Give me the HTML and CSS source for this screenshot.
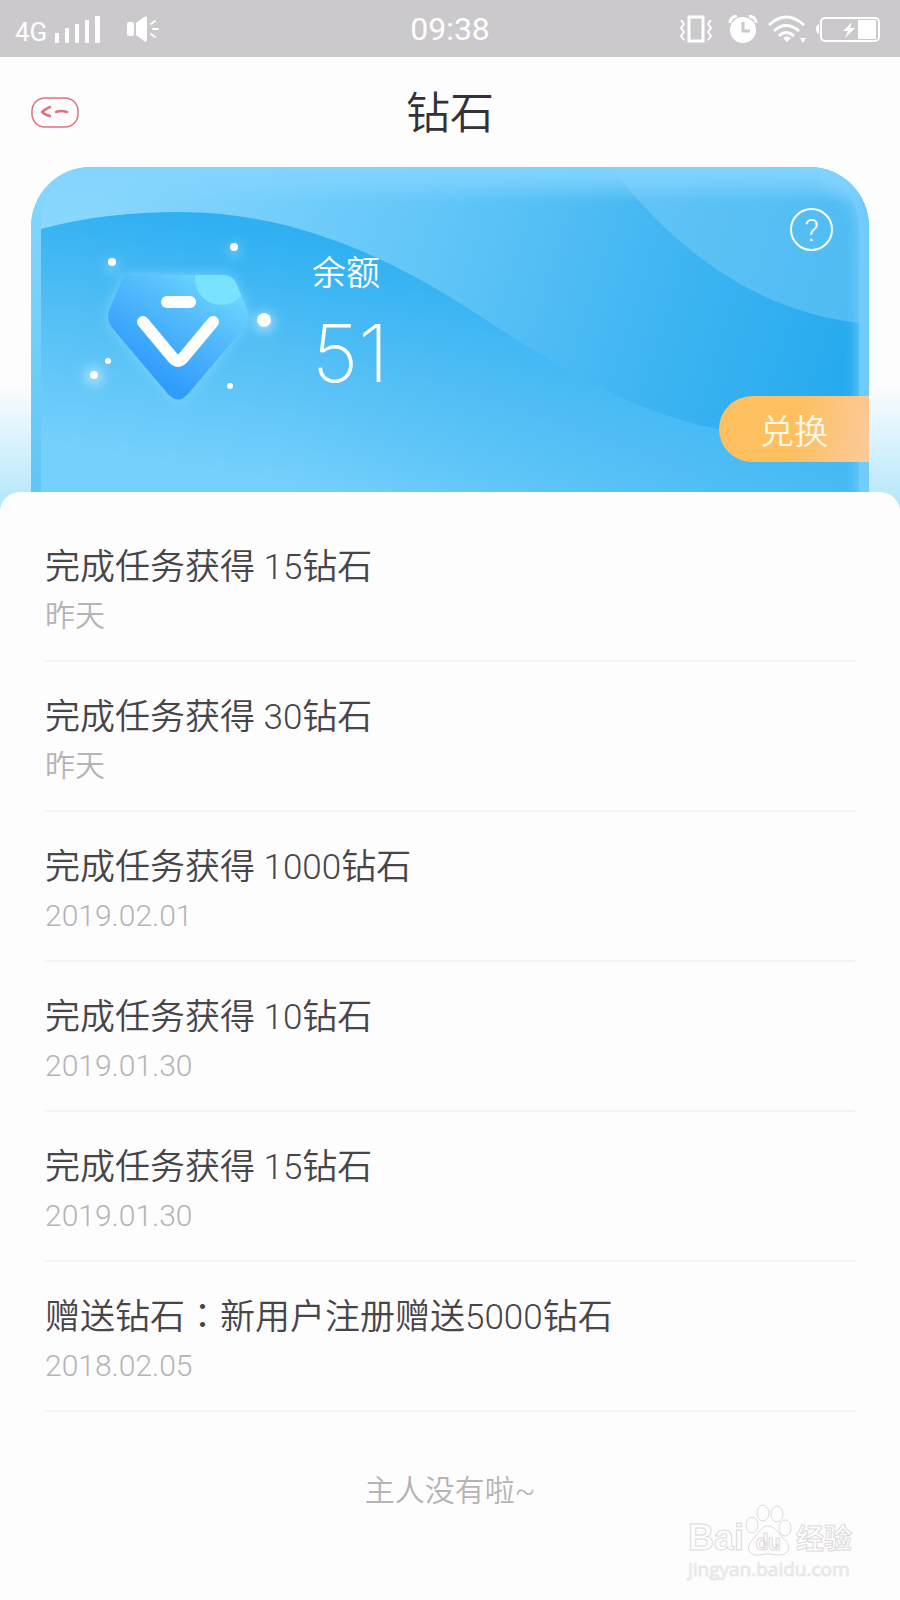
FILE: index.html
```html
<!DOCTYPE html>
<html lang="zh-CN">
<head>
    <meta charset="UTF-8">
    <meta name="viewport" content="width=device-width, initial-scale=1.0">
    <title>钻石</title>
    <link rel="stylesheet" href="styles.css">
</head>
<body>
    <div class="status-bar">
        <div class="status-left">
            <span class="network">4G</span>
            <svg class="signal" width="46" height="28" viewBox="0 0 46 28" fill="#fff">
                <path d="M0 18h4v10H0zM10 13h4v15h-4zM20 9h4v19h-4zM30 5h4v23h-4zM40 1h5v27h-5z"/>
            </svg>
            <svg width="32" height="28" viewBox="0 0 32 28" fill="#fff">
                <rect x="0" y="7" width="7" height="14" rx="2"/>
                <path d="M9 8l8-6q3-2 3 1v22q0 3-3 1l-8-6z"/>
                <path d="M24 9l4-3M26 14h5M24 19l4 3" stroke="#fff" stroke-width="2" stroke-linecap="round"/>
            </svg>
        </div>
        <div class="status-time">09:38</div>
        <div class="status-right">
            <svg class="vibrate" width="32" height="28" viewBox="0 0 32 28" fill="none" stroke="#fff">
                <rect x="9" y="2" width="14" height="24" stroke-width="3"/>
                <path d="M1 5l3 4-3 4 3 4-3 4 3 4M31 5l-3 4 3 4-3 4 3 4-3 4" stroke-width="2"/>
            </svg>
            <svg width="30" height="28" viewBox="0 0 30 28">
                <circle cx="15" cy="15" r="13" fill="#fff"/>
                <path d="M2 8q0-6 7-7M28 8q0-6-7-7" fill="none" stroke="#fff" stroke-width="3"/>
                <path d="M15 7v9h7" fill="none" stroke="#cbc9cc" stroke-width="3"/>
            </svg>
            <svg width="38" height="28" viewBox="0 0 38 28">
                <g fill="none" stroke="#fff" stroke-width="3">
                    <path d="M1 10q17-16 35 0"/>
                    <path d="M6 16q12-11 25 0"/>
                    <path d="M11 21q7-7 15 0"/>
                </g>
                <path d="M15 23q4-3 8 0l-4 4zM32 23h6l-3 5z" fill="#fff"/>
            </svg>
            <svg width="64" height="28" viewBox="0 0 64 28">
                <path d="M3 9q-3 1-3 5t3 5z" fill="#fff"/>
                <rect x="5" y="3" width="58" height="23" rx="4" fill="none" stroke="#fff" stroke-width="2"/>
                <path d="M36 7l-9 9h5l-3 7 10-10h-5z" fill="#fff"/>
                <rect x="42" y="5" width="18" height="19" rx="1" fill="#fff"/>
            </svg>
        </div>
    </div>

    <header class="header">
        <button class="back" aria-label="返回">
            <svg width="48" height="31" viewBox="0 0 48 31" fill="none" stroke="#de7280">
                <rect x="1" y="1" width="46" height="29" rx="13" stroke-width="1.5"/>
                <path d="M19 10q-5 2-8 5 3 3 8 4M25 15q5-2 11 0" stroke-width="2.5" stroke-linecap="round" stroke-linejoin="round"/>
            </svg>
        </button>
        <h1 class="title">钻石</h1>
    </header>

    <div class="banner">
        <div class="card">
            <svg class="card-bg" viewBox="0 0 838 325" preserveAspectRatio="none">
                <defs>
                    <linearGradient id="sky" gradientUnits="userSpaceOnUse" x1="80" y1="0" x2="800" y2="230">
                        <stop offset="0" stop-color="#87d7fe"/>
                        <stop offset="0.45" stop-color="#60c5f7"/>
                        <stop offset="0.75" stop-color="#3fb5f2"/>
                        <stop offset="1" stop-color="#27abef"/>
                    </linearGradient>
                    <linearGradient id="wave" gradientUnits="userSpaceOnUse" x1="200" y1="60" x2="160" y2="300">
                        <stop offset="0" stop-color="#30b0f2"/>
                        <stop offset="0.5" stop-color="#55c0f5"/>
                        <stop offset="1" stop-color="#75d0fb"/>
                    </linearGradient>
                    <linearGradient id="waveShade" x1="0" y1="0" x2="1" y2="0">
                        <stop offset="0.3" stop-color="#3ab4f3" stop-opacity="0"/>
                        <stop offset="1" stop-color="#3ab4f3" stop-opacity="0.65"/>
                    </linearGradient>
                    <linearGradient id="edge" x1="0" y1="0" x2="0" y2="1">
                        <stop offset="0" stop-color="#87d7fe"/>
                        <stop offset="1" stop-color="#60c6f6"/>
                    </linearGradient>
                    <linearGradient id="topGlow" x1="0" y1="0" x2="0" y2="1">
                        <stop offset="0" stop-color="#84d4ff" stop-opacity="0.95"/>
                        <stop offset="0.35" stop-color="#84d4ff" stop-opacity="0.75"/>
                        <stop offset="1" stop-color="#84d4ff" stop-opacity="0"/>
                    </linearGradient>
                    <filter id="soft" x="-50%" y="-10%" width="200%" height="120%">
                        <feGaussianBlur stdDeviation="6"/>
                    </filter>
                </defs>
                <rect width="838" height="325" fill="url(#sky)"/>
                <path d="M580 0C640 80 725 145 828 156V0z" fill="#8ad4fb" fill-opacity="0.4"/>
                <path d="M10 62C55 50 100 45 149 45C250 45 340 82 419 130C500 181 580 240 686 262C740 274 790 280 838 282V325H10z" fill="url(#wave)"/>
                <path d="M10 62C55 50 100 45 149 45C250 45 340 82 419 130C500 181 580 240 686 262C740 274 790 280 838 282V325H10z" fill="url(#waveShade)"/>
                <path d="M790 14Q832 22 832 62V340" fill="none" stroke="#7dd0fd" stroke-width="12" stroke-opacity="0.8" filter="url(#soft)"/>
                <path d="M0 0H60Q10 8 10 62V325H0z" fill="url(#edge)"/>
                <path d="M770 0H838V325H828V62Q828 10 770 10z" fill="#76cefc" fill-opacity="0.8"/>
                <rect width="838" height="36" fill="url(#topGlow)"/>
            </svg>

            <svg class="diamond" width="200" height="170" viewBox="0 0 200 170">
                <defs>
                    <linearGradient id="gem" x1="0.8" y1="0.1" x2="0.3" y2="0.75">
                        <stop offset="0" stop-color="#6dd9ff"/>
                        <stop offset="0.4" stop-color="#55bdfb"/>
                        <stop offset="1" stop-color="#309dfd"/>
                    </linearGradient>
                    <clipPath id="gemShape">
                        <path d="M48 35H143Q152 35 156 43L166 67Q172 78 163 89L108 154Q98 165 88 154L33 89Q25 80 30 68L40 44Q43 35 48 35z"/>
                    </clipPath>
                    <filter id="glow" x="-100%" y="-100%" width="300%" height="300%">
                        <feGaussianBlur stdDeviation="6"/>
                    </filter>
                </defs>
                <path d="M48 35H143Q152 35 156 43L166 67Q172 78 163 89L108 154Q98 165 88 154L33 89Q25 80 30 68L40 44Q43 35 48 35z" fill="#8fdcff" fill-opacity="0.7" filter="url(#glow)"/>
                <g fill="#fff" fill-opacity="0.5" filter="url(#glow)">
                    <circle cx="184" cy="82" r="10"/>
                    <circle cx="14" cy="136" r="9"/>
                    <circle cx="154" cy="10" r="5"/>
                    <circle cx="32" cy="26" r="5"/>
                </g>
                <g clip-path="url(#gemShape)">
                    <rect x="20" y="30" width="160" height="135" fill="url(#gem)"/>
                    <circle cx="141" cy="39" r="26" fill="#78e2ff"/>
                </g>
                <rect x="81" y="56" width="35" height="12" rx="6" fill="#fff"/>
                <path d="M63 82L93 118Q98 124 103 118L133 82" fill="none" stroke="#fff" stroke-width="12" stroke-linecap="round"/>
                <g fill="#fff">
                    <circle cx="154" cy="7" r="4"/>
                    <circle cx="32" cy="22" r="4"/>
                    <circle cx="184" cy="80" r="7"/>
                    <circle cx="28" cy="121" r="3"/>
                    <circle cx="14" cy="135" r="4"/>
                    <circle cx="150" cy="146" r="3"/>
                </g>
            </svg>

            <div class="balance">
                <div class="balance-label">余额</div>
                <div class="balance-value">51</div>
            </div>

            <div class="card-actions">
                <button class="help" aria-label="帮助">?</button>
                <button class="exchange">兑换</button>
            </div>
        </div>
    </div>

    <main class="records">
        <ul class="record-list">
            <li class="record">
                <div class="record-name">完成任务获得 15钻石</div>
                <div class="record-date">昨天</div>
            </li>
            <li class="record">
                <div class="record-name">完成任务获得 30钻石</div>
                <div class="record-date">昨天</div>
            </li>
            <li class="record">
                <div class="record-name">完成任务获得 1000钻石</div>
                <div class="record-date">2019.02.01</div>
            </li>
            <li class="record">
                <div class="record-name">完成任务获得 10钻石</div>
                <div class="record-date">2019.01.30</div>
            </li>
            <li class="record">
                <div class="record-name">完成任务获得 15钻石</div>
                <div class="record-date">2019.01.30</div>
            </li>
            <li class="record">
                <div class="record-name">赠送钻石<span class="colon" lang="zh-TW">：</span>新用户注册赠送5000钻石</div>
                <div class="record-date">2018.02.05</div>
            </li>
        </ul>
        <p class="end">主人没有啦~</p>
    </main>

    <div class="watermark">
        <div class="brand">
            <span class="brand-bai">Bai</span>
            <span class="brand-paw">
                <svg width="48" height="52" viewBox="0 0 48 52" fill="#fefdfe" stroke="#dcdadc">
                    <ellipse cx="8" cy="21" rx="6" ry="8"/>
                    <ellipse cx="19" cy="9" rx="6" ry="8"/>
                    <ellipse cx="33" cy="10" rx="6" ry="8"/>
                    <ellipse cx="41" cy="24" rx="6" ry="8"/>
                    <path d="M24 22C30 22 33 27 38 33C45 39 47 45 42 49C37 53 31 50 24 50C17 50 12 53 7 49C2 45 5 39 11 33C16 27 18 22 24 22z"/>
                </svg>
                <span class="brand-du">du</span>
            </span>
            <span class="brand-jy">经验</span>
        </div>
        <div class="site">jingyan.baidu.com</div>
    </div>
</body>
</html>
```

FILE: styles.css
```css
* {
    box-sizing: border-box;
}

body {
    position: relative;
    margin: 0;
    min-height: 100vh;
    background-color: #fefdfe;
    color: #474548;
    font-family: Roboto, "Noto Sans CJK SC", sans-serif;
    font-weight: 350;
}

button {
    padding: 0;
    border: none;
    background: none;
    font-family: inherit;
    font-weight: inherit;
    cursor: pointer;
}

svg {
    display: block;
}

.status-bar {
    display: grid;
    grid-template-columns: 1fr auto 1fr;
    align-items: center;
    height: 57px;
    padding: 0 15px;
    background-color: #cbc9cc;
    color: #fff;
}

.status-left,
.status-right {
    display: flex;
    align-items: center;
}

.status-right {
    justify-content: flex-end;
    gap: 10px;
    padding-right: 5px;
}

.vibrate {
    margin-right: 6px;
}

.network {
    padding-top: 6px;
    font-size: 26px;
    line-height: 28px;
    font-weight: 400;
}

.signal {
    margin: 0 26px 0 8px;
}

.status-time {
    font-size: 32px;
    font-weight: 400;
}

.header {
    display: grid;
    grid-template-columns: 1fr auto 1fr;
    align-items: center;
    height: 110px;
    padding: 0 31px;
}

.back {
    justify-self: start;
}

.title {
    margin: 0;
    padding-bottom: 4px;
    color: #333135;
    font-size: 44px;
    font-weight: 350;
}

.banner {
    padding: 0 31px;
    background: linear-gradient(#fefdfe 62%, #b0e5fb 100%);
}

.card {
    position: relative;
    display: flex;
    height: 345px;
    padding: 73px 0 0 49px;
    border-radius: 60px 60px 0 0;
    overflow: hidden;
    color: #fff;
}

.card-bg {
    position: absolute;
    top: 0;
    left: 0;
    width: 100%;
    height: 325px;
}

.diamond {
    position: relative;
    overflow: visible;
}

.balance {
    position: relative;
    flex: 1;
    padding: 8px 0 0 32px;
}

.balance-label {
    font-size: 34px;
    line-height: 50px;
}

.balance-value {
    font-family: Inter, sans-serif;
    font-size: 80px;
    font-weight: 250;
    line-height: 110px;
}

.card-actions {
    position: relative;
    display: flex;
    flex-direction: column;
    align-items: flex-end;
    justify-content: space-between;
    height: 254px;
    margin-top: -32px;
}

.help {
    width: 43px;
    height: 43px;
    margin-right: 36px;
    border: 2px solid #fff;
    border-radius: 50%;
    color: #fff;
    font-size: 32px;
    line-height: 38px;
}

.exchange {
    width: 150px;
    height: 66px;
    border-radius: 33px 0 0 33px;
    background: linear-gradient(100deg, #fdbf5f 50%, #fcca9b);
    color: #fff8ea;
    font-size: 34px;
}

.records {
    position: relative;
    margin-top: -20px;
    padding: 20px 45px 0;
    border-radius: 20px 20px 0 0;
    background-color: #fefdfe;
}

.record-list {
    margin: 0;
    padding: 0;
    list-style: none;
}

.record {
    height: 150px;
    padding-top: 30px;
    border-bottom: 2px solid #f4f3f6;
}

.record-name {
    font-size: 35px;
    line-height: 52px;
}

.colon {
    font-family: Roboto, "Noto Sans CJK TC", sans-serif;
}

.record-date {
    color: #b5b3b6;
    font-size: 30px;
    line-height: 44px;
}

.end {
    margin: 56px 0 0;
    color: #b5b3b6;
    font-size: 30px;
    line-height: 46px;
    text-align: center;
}

.watermark {
    position: absolute;
    right: 48px;
    bottom: 18px;
    color: #fefdfe;
    font-weight: 700;
    -webkit-text-stroke: 1px #dcdadc;
}

.brand {
    display: flex;
    align-items: flex-end;
    height: 54px;
    line-height: 36px;
}

.brand-bai {
    font-family: "Liberation Sans", sans-serif;
    font-size: 36px;
}

.brand-paw {
    position: relative;
}

.brand-du {
    position: absolute;
    right: 0;
    bottom: 0;
    left: 0;
    font-size: 22px;
    line-height: 26px;
    text-align: center;
}

.brand-jy {
    padding-left: 4px;
    font-size: 28px;
    line-height: 32px;
}

.site {
    color: #f0eff0;
    font-family: "Open Sans", sans-serif;
    font-size: 19px;
    font-weight: 400;
    line-height: 26px;
    -webkit-text-stroke-color: #e9e7e9;
}
```
